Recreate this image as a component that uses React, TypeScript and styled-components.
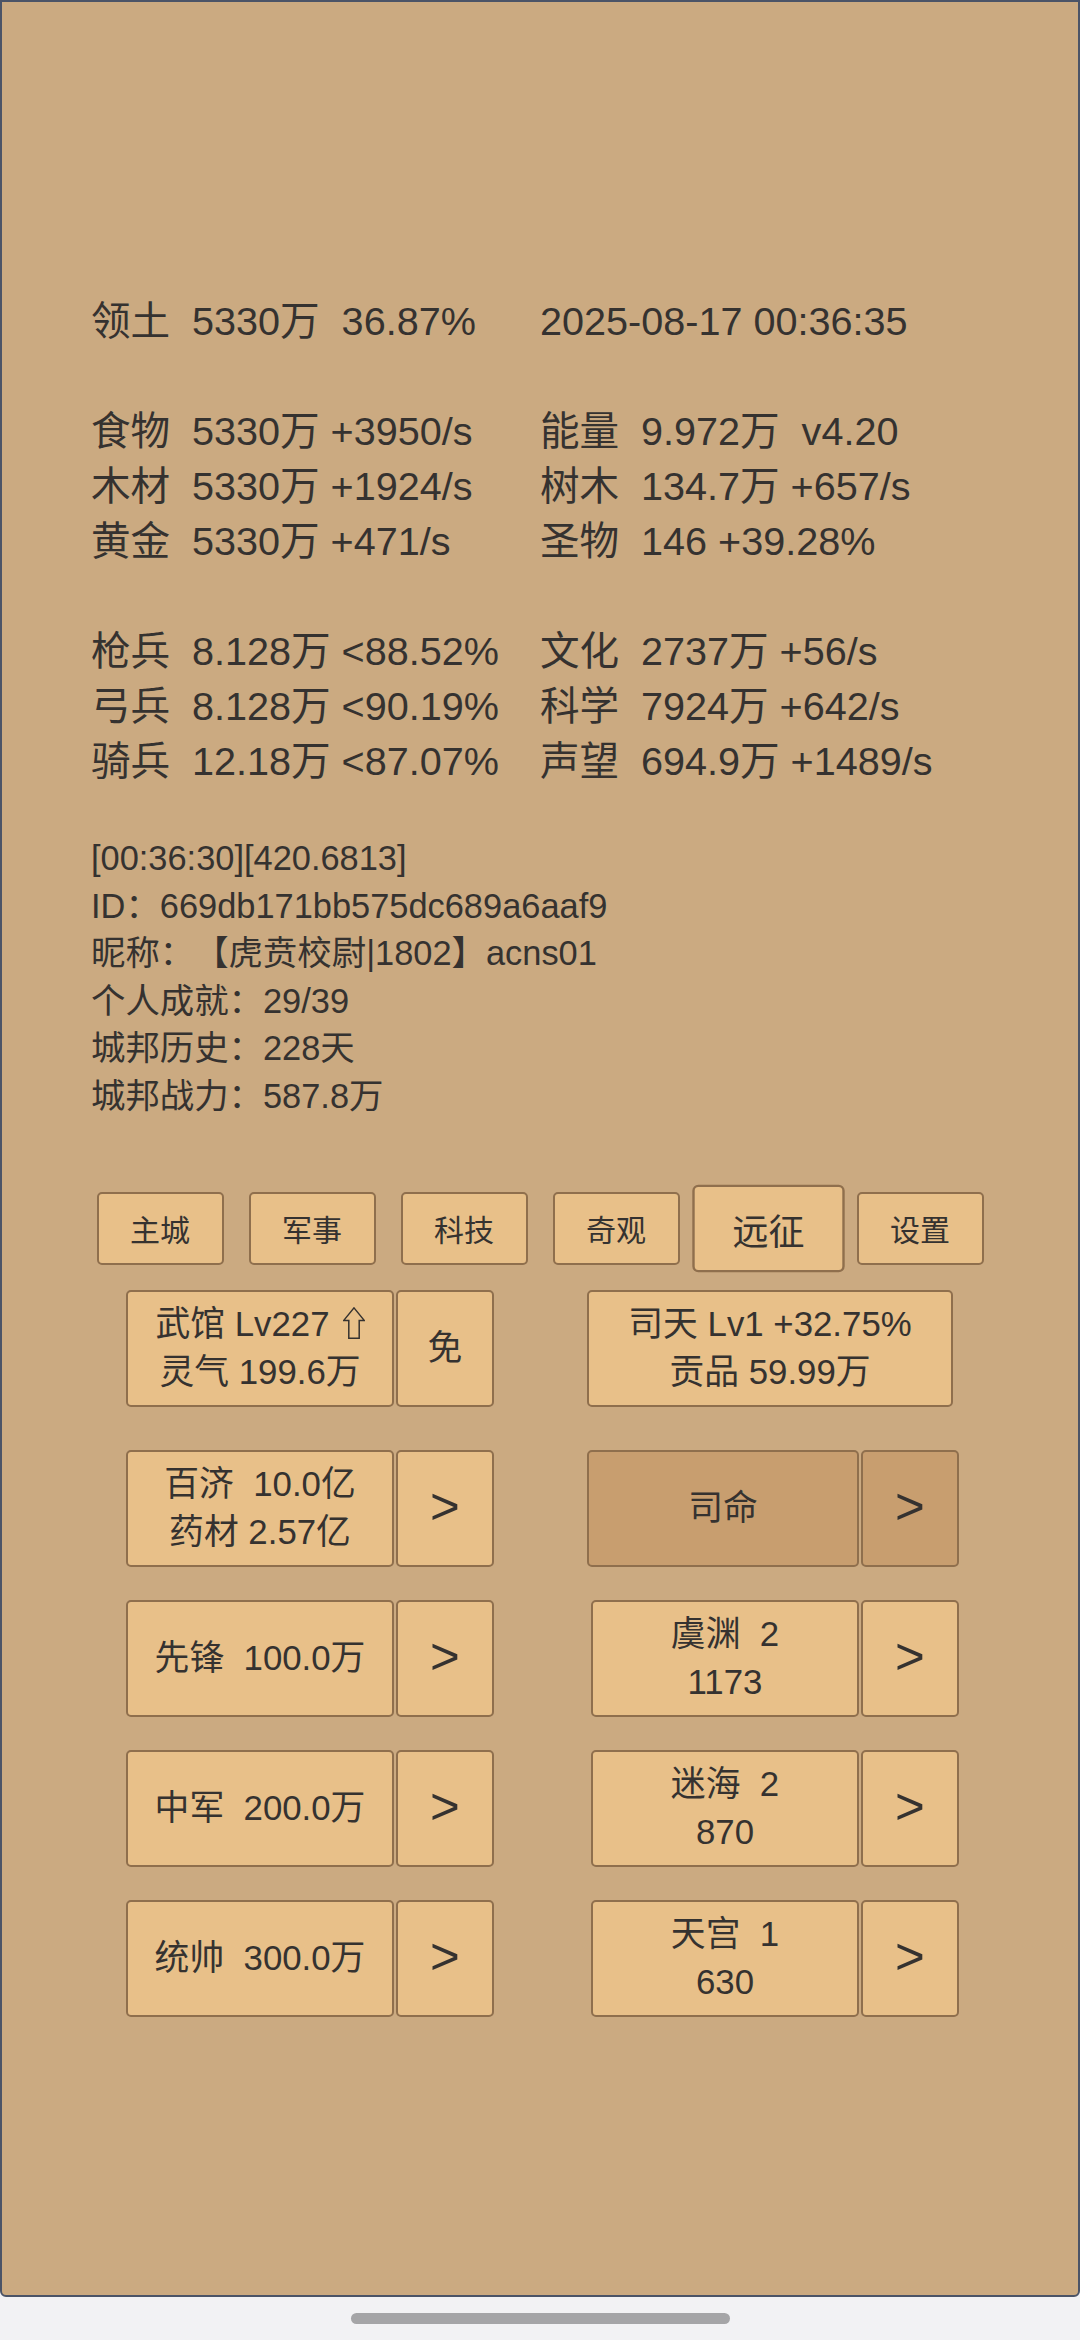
import React from 'react';
import styled, { createGlobalStyle } from 'styled-components';

const COLOR_BG = '#cbaa81';
const COLOR_CARD = '#e8c089';
const COLOR_CARD_DARK = '#c89e6f';
const COLOR_CARD_BORDER = '#8f6f4d';
const COLOR_TEXT = '#353230';
const FONT = '"Liberation Sans", "Noto Sans CJK SC", sans-serif';

const GlobalStyle = createGlobalStyle`
  html, body {
    margin: 0;
    padding: 0;
    background: #f2f2f4;
  }
  * {
    box-sizing: border-box;
  }
`;

const Page = styled.div`
  width: 1080px;
  height: 2340px;
  display: flex;
  flex-direction: column;
  font-family: ${FONT};
  color: ${COLOR_TEXT};
  text-spacing-trim: space-all;
`;

const Screen = styled.div`
  height: 2297px;
  background: ${COLOR_BG};
  border: 2px solid #4b5467;
  border-radius: 0 0 6px 6px;
  padding-top: 292px;
  display: flex;
  flex-direction: column;
`;

const StatsGrid = styled.div`
  display: grid;
  grid-template-columns: 449px 1fr;
  padding-left: 89px;
  font-size: 39.6px;
  line-height: 55px;
`;

const StatCell = styled.div`
  display: flex;
  white-space: pre;
`;

const StatLabel = styled.span`
  width: 101px;
  flex-shrink: 0;
`;

const BlankLine = styled.div`
  grid-column: 1 / span 2;
  height: 55px;
`;

const Info = styled.div`
  margin-top: 46px;
  padding-left: 89px;
  font-size: 34.4px;
  line-height: 47.6px;
  white-space: pre;
`;

const Tabs = styled.div`
  margin-top: 71px;
  display: flex;
  justify-content: center;
  gap: 25px;
`;

const Tab = styled.div<{ $active?: boolean }>`
  width: 127px;
  height: 73px;
  display: flex;
  align-items: center;
  justify-content: center;
  background: ${COLOR_CARD};
  border: 2px solid ${COLOR_CARD_BORDER};
  border-radius: 5px;
  font-size: 30px;
  transform: ${(p) => (p.$active ? 'scale(1.2)' : 'none')};
`;

const Board = styled.div`
  margin-top: 25px;
  padding-left: 124px;
  display: flex;
  flex-direction: column;
`;

const BoardRow = styled.div<{ $top: number }>`
  margin-top: ${(p) => p.$top}px;
  display: grid;
  grid-template-columns: 367px 368px;
  column-gap: 98px;
`;

const Pair = styled.div<{ $shift?: number }>`
  display: flex;
  gap: 2px;
  margin-left: ${(p) => p.$shift || 0}px;
`;

const Card = styled.div<{ $width: number; $dark?: boolean }>`
  width: ${(p) => p.$width}px;
  height: 117px;
  flex-shrink: 0;
  display: flex;
  flex-direction: column;
  align-items: center;
  justify-content: center;
  background: ${(p) => (p.$dark ? COLOR_CARD_DARK : COLOR_CARD)};
  border: 2px solid ${COLOR_CARD_BORDER};
  border-radius: 5px;
  font-size: 34.8px;
  line-height: 47.6px;
  white-space: pre;
`;

const CardLine = styled.div`
  display: flex;
  align-items: center;
`;

const UpArrow = styled.svg`
  width: 22px;
  height: 32px;
  margin-left: 13px;
  margin-top: -2px;
`;

const Chevron = styled.span`
  font-size: 51px;
  line-height: 1;
  margin-top: -4px;
`;

const HomeArea = styled.div`
  flex: 1;
  display: flex;
  justify-content: center;
  padding-top: 16px;
`;

const HomeBar = styled.div`
  width: 379px;
  height: 11px;
  border-radius: 6px;
  background: #a5a5a7;
`;

const stats: [string, string, string, string][] = [
  ['食物', '5330万 +3950/s', '能量', '9.972万  v4.20'],
  ['木材', '5330万 +1924/s', '树木', '134.7万 +657/s'],
  ['黄金', '5330万 +471/s', '圣物', '146 +39.28%'],
];

const troops: [string, string, string, string][] = [
  ['枪兵', '8.128万 <88.52%', '文化', '2737万 +56/s'],
  ['弓兵', '8.128万 <90.19%', '科学', '7924万 +642/s'],
  ['骑兵', '12.18万 <87.07%', '声望', '694.9万 +1489/s'],
];

const tabs = ['主城', '军事', '科技', '奇观', '远征', '设置'];

const infoLines = [
  '[00:36:30][420.6813]',
  'ID：669db171bb575dc689a6aaf9',
  '昵称：【虎贲校尉|1802】acns01',
  '个人成就：29/39',
  '城邦历史：228天',
  '城邦战力：587.8万',
];

const expeditions = [
  { left: '先锋  100.0万', right: ['虞渊  2', '1173'] },
  { left: '中军  200.0万', right: ['迷海  2', '870'] },
  { left: '统帅  300.0万', right: ['天宫  1', '630'] },
];

const StatRows = ({ rows }: { rows: [string, string, string, string][] }) => (
  <>
    {rows.map((r) => (
      <React.Fragment key={r[0]}>
        <StatCell>
          <StatLabel>{r[0]}</StatLabel>
          {r[1]}
        </StatCell>
        <StatCell>
          <StatLabel>{r[2]}</StatLabel>
          {r[3]}
        </StatCell>
      </React.Fragment>
    ))}
  </>
);

const App = () => {
  return (
    <>
      <GlobalStyle />
      <Page>
        <Screen>
          <StatsGrid>
            <StatCell>
              <StatLabel>领土</StatLabel>
              {'5330万  36.87%'}
            </StatCell>
            <StatCell>2025-08-17 00:36:35</StatCell>
            <BlankLine />
            <StatRows rows={stats} />
            <BlankLine />
            <StatRows rows={troops} />
          </StatsGrid>

          <Info>
            {infoLines.map((line) => (
              <div key={line}>{line}</div>
            ))}
          </Info>

          <Tabs>
            {tabs.map((t) => (
              <Tab key={t} $active={t === '远征'}>
                {t}
              </Tab>
            ))}
          </Tabs>

          <Board>
            <BoardRow $top={0}>
              <Pair>
                <Card $width={268}>
                  <CardLine>
                    武馆 Lv227
                    <UpArrow viewBox="0 0 22 32">
                      <polygon
                        points="11,0.9 21.2,13.4 16.2,13.4 16.2,31.2 5.8,31.2 5.8,13.4 0.8,13.4"
                        fill="none"
                        stroke={COLOR_TEXT}
                        strokeWidth="1.5"
                        strokeLinejoin="miter"
                      />
                    </UpArrow>
                  </CardLine>
                  <div>灵气 199.6万</div>
                </Card>
                <Card $width={98}>免</Card>
              </Pair>
              <Pair $shift={-4}>
                <Card $width={366}>
                  <div>司天 Lv1 +32.75%</div>
                  <div>贡品 59.99万</div>
                </Card>
              </Pair>
            </BoardRow>

            <BoardRow $top={43}>
              <Pair>
                <Card $width={268}>
                  <div>百济  10.0亿</div>
                  <div>药材 2.57亿</div>
                </Card>
                <Card $width={98}>
                  <Chevron>&gt;</Chevron>
                </Card>
              </Pair>
              <Pair $shift={-4}>
                <Card $width={272} $dark>
                  司命
                </Card>
                <Card $width={98} $dark>
                  <Chevron>&gt;</Chevron>
                </Card>
              </Pair>
            </BoardRow>

            {expeditions.map((e) => (
              <BoardRow $top={33} key={e.left}>
                <Pair>
                  <Card $width={268}>{e.left}</Card>
                  <Card $width={98}>
                    <Chevron>&gt;</Chevron>
                  </Card>
                </Pair>
                <Pair>
                  <Card $width={268}>
                    <div>{e.right[0]}</div>
                    <div>{e.right[1]}</div>
                  </Card>
                  <Card $width={98}>
                    <Chevron>&gt;</Chevron>
                  </Card>
                </Pair>
              </BoardRow>
            ))}
          </Board>
        </Screen>
        <HomeArea>
          <HomeBar />
        </HomeArea>
      </Page>
    </>
  );
};

export default App;
